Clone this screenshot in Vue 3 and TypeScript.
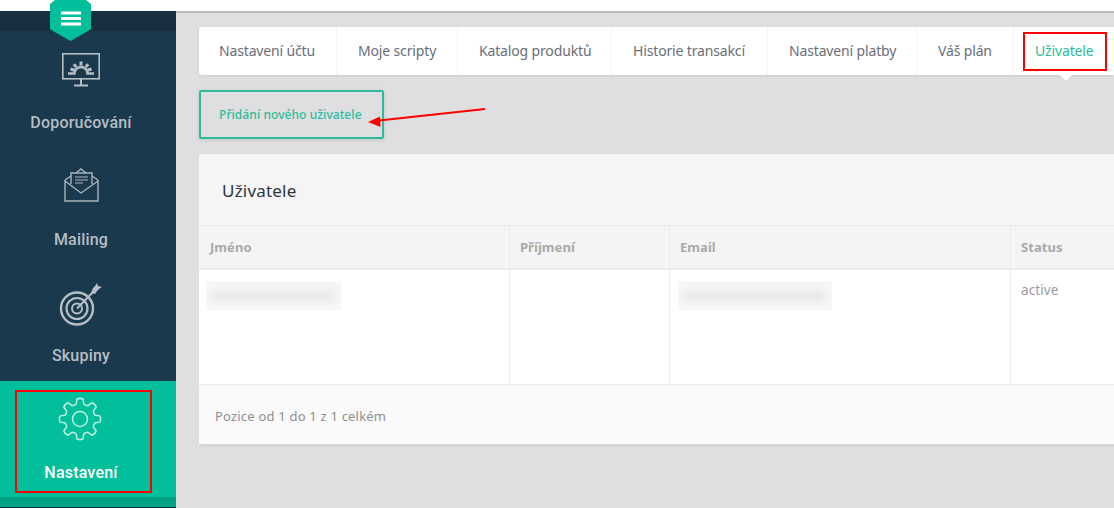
<script setup lang="ts">
const tabs = [
  { label: 'Nastavení účtu', w: 138 },
  { label: 'Moje scripty', w: 121 },
  { label: 'Katalog produktů', w: 154 },
  { label: 'Historie transakcí', w: 156 },
  { label: 'Nastavení platby', w: 149 },
  { label: 'Váš plán', w: 97 },
  { label: 'Uživatele', w: 100, active: true },
]

function polar(r: number, deg: number): string {
  const a = ((deg - 90) * Math.PI) / 180
  return `${(22 + r * Math.cos(a)).toFixed(2)} ${(22 + r * Math.sin(a)).toFixed(2)}`
}

const gearPath = (() => {
  let d = ''
  for (let i = 0; i < 8; i++) {
    const a = i * 45
    d += `${i === 0 ? 'M' : 'L'}${polar(15.5, a - 14)}`
    d += `L${polar(20, a - 9)}Q${polar(21.5, a)} ${polar(20, a + 9)}L${polar(15.5, a + 14)}`
    d += `Q${polar(14.5, a + 22.5)} ${polar(15.5, a + 31)}`
  }
  return d + 'Z'
})()
</script>

<template>
  <div class="page">
    <div class="topbar"></div>
    <div class="body">
      <aside class="side">
        <div class="side-head"></div>
        <div class="item">
          <svg class="ic mon" width="40" height="36" viewBox="0 0 40 36" fill="none" stroke="#b5bec5" stroke-width="1.6">
            <rect x="1.800" y="1.800" width="36.400" height="25" />
            <path d="M20 27v6" stroke-width="2" />
            <path d="M13 33.500h14" stroke-width="2" />
            <path d="M7 21.500h6.500a6.500 6.500 0 0 1 13 0H33" stroke-width="2.400" />
            <path d="M20 9.500v4M12.800 12.300l2.500 2.700M27.200 12.300l-2.500 2.700M9.500 17l4 1.300M30.500 17l-4 1.300" stroke-width="3" />
          </svg>
          <span>Doporučování</span>
        </div>
        <div class="item low">
          <svg class="ic env" width="36" height="36" viewBox="0 0 36 36" fill="none" stroke="#a9b4bb" stroke-width="1.4">
            <path d="M2 13v21h33V13" />
            <path d="M2 14l16 12 17-12" />
            <path d="M2 13l6-4M35 13l-6-4M13 6l5-4 5 4" />
            <path d="M8 17V6h21v11" />
            <path d="M12 10h13M12 13h13M12 16h8" stroke-width="1.200" />
          </svg>
          <span>Mailing</span>
        </div>
        <div class="item tall low">
          <svg class="ic tgt" width="46" height="44" viewBox="0 0 46 44" fill="none" stroke="#b5bec5">
            <circle cx="19" cy="25.500" r="16" stroke-width="2.400" />
            <circle cx="19" cy="25.500" r="10.500" stroke-width="2.200" />
            <circle cx="19" cy="25.500" r="5" stroke-width="2" />
            <path d="M19 25.500L36 8" stroke-width="2" />
            <path d="M35 5l2-2 2-3 1 3 4 1-3 2-2 2-2 3-4-1z" fill="#b5bec5" stroke="none" />
          </svg>
          <span>Skupiny</span>
        </div>
        <div class="item active">
          <svg class="ic gear" width="44" height="44" viewBox="0 0 44 44" fill="none" stroke="#bfeee0" stroke-width="1.500">
            <circle cx="22" cy="22" r="7.500" />
            <path :d="gearPath" stroke-linejoin="round" />
          </svg>
          <span>Nastavení</span>
        </div>
        <div class="active-foot"></div>
      </aside>

      <main class="main">
        <nav class="tabs">
          <a
            v-for="t in tabs"
            :key="t.label"
            class="tab"
            :class="{ on: t.active }"
            :style="{ flexBasis: t.w + 'px' }"
          >{{ t.label }}</a>
        </nav>
        <button class="add">Přidání nového uživatele</button>
        <section class="card">
          <h2>Uživatele</h2>
          <div class="grid head">
            <div>Jméno</div>
            <div>Příjmení</div>
            <div>Email</div>
            <div>Status</div>
          </div>
          <div class="grid row">
            <div><span class="smudge name"><i></i></span></div>
            <div></div>
            <div><span class="smudge mail"><i></i></span></div>
            <div class="st">active</div>
          </div>
          <footer>Pozice od 1 do 1 z 1 celkém</footer>
        </section>
      </main>
    </div>

    <div class="burger">
      <svg width="20" height="15" viewBox="0 0 20 15" fill="#fff">
        <rect width="20" height="3" y="0.500" rx="0.500" />
        <rect width="20" height="3" y="6" rx="0.500" />
        <rect width="20" height="3" y="11.500" rx="0.500" />
      </svg>
    </div>
    <div class="mark mark-side"></div>
    <div class="mark mark-tab"></div>
    <svg class="arrow" width="130" height="30" viewBox="0 0 130 30">
      <path d="M121 3L15 14.500" stroke="#f00" stroke-width="2" fill="none" />
      <path d="M4 16L16 10.500L16.500 21z" fill="#f00" />
    </svg>
  </div>
</template>

<style>
html, body { margin: 0; background: #dfdfe1; }
</style>

<style scoped>
.page {
  position: relative;
  width: 1114px;
  height: 508px;
  overflow: hidden;
  background: #dfdfe1;
  font-family: "Noto Sans", "Open Sans", sans-serif;
}
.topbar {
  height: 11px;
  background: #fff;
  border-bottom: 2px solid #b9b9bb;
  box-sizing: content-box;
  margin-bottom: -2px;
  position: relative;
  z-index: 1;
}
.body { display: flex; height: 497px; }
.side {
  width: 176px;
  flex: none;
  background: #1b394d;
  display: flex;
  flex-direction: column;
  font-family: Roboto, sans-serif;
  position: relative;
  z-index: 2;
}
.side-head { height: 20px; background: #172f40; }
.item {
  height: 116px;
  flex: none;
  box-sizing: border-box;
  border-bottom: 1px solid #19344a;
  color: #b5bec5;
  font-size: 16px;
  font-weight: 500;
  letter-spacing: 0.2px;
  position: relative;
}
.item.tall { height: 118px; border-bottom: 0; }
.item span {
  position: absolute;
  top: 82px;
  left: -14px;
  right: 0;
  text-align: center;
  line-height: 20px;
}
.item.low span { top: 83px; }
.item.active { background: #00bf9a; color: #fff; border-bottom: 0; }
.ic { position: absolute; }
.mon { top: 21px; left: 61px; }
.env { top: 20px; left: 63px; }
.tgt { top: 20px; left: 58px; }
.gear { top: 16px; left: 58px; }
.active-foot { height: 10px; background: #00a284; border-bottom: 1px solid #103040; flex: none; }
.main { flex: 1; min-width: 0; padding: 16px 0 0 23px; overflow: hidden; }
.tabs {
  display: flex;
  height: 48px;
  width: 915px;
  background: #fff;
  border-radius: 3px 0 0 3px;
  box-shadow: 0 1px 3px rgba(0, 0, 0, 0.08);
  position: relative;
}
.tab {
  flex: none;
  box-sizing: border-box;
  padding: 0 0 0 20px;
  border-right: 1px solid #f4f4f5;
  color: #6a6e78;
  font-size: 14px;
  line-height: 47px;
  white-space: nowrap;
  position: relative;
  letter-spacing: -0.15px;
}
.tab + .tab { padding-left: 21px; }
.tab:last-child { border-right: 0; }
.tab.on { color: #2bbd9a; }
.tab.on::after {
  content: "";
  position: absolute;
  left: 46px;
  bottom: -6px;
  border: 6px solid transparent;
  border-top-color: #fff;
  border-bottom: 0;
}
.add {
  display: block;
  margin: 15px 0 15px;
  width: 185px;
  height: 49px;
  box-sizing: border-box;
  background: transparent;
  border: 2px solid #2bbb9b;
  border-radius: 2px;
  box-shadow: 0 1px 4px rgba(0, 0, 0, 0.12);
  color: #2bbd9a;
  font: 500 12px "Noto Sans", sans-serif;
  letter-spacing: 0.07px;
  text-align: left;
  padding: 0 0 0 18px;
}
.card {
  width: 915px;
  height: 293px;
  box-sizing: border-box;
  background: #f5f5f5;
  border-radius: 3px 0 0 3px;
  border-bottom: 3px solid #d6d6d6;
  display: flex;
  flex-direction: column;
}
h2 {
  margin: 0;
  height: 72px;
  box-sizing: border-box;
  padding: 25px 0 0 23px;
  font-size: 17px;
  line-height: 24px;
  font-weight: 400;
  letter-spacing: 0.2px;
  color: #2f3542;
  border-bottom: 1px solid #ebebeb;
}
.grid {
  display: grid;
  grid-template-columns: 310px 160px 341px 1fr;
  margin-left: 1px;
}
.grid > div { box-sizing: border-box; border-right: 1px solid #ececec; }
.grid > div:last-child { border-right: 0; }
.head {
  height: 44px;
  box-sizing: border-box;
  background: #f4f4f4;
  border-bottom: 2px solid #ececec;
  color: #a9a9ac;
  font-size: 13px;
  font-weight: 700;
  line-height: 42px;
  letter-spacing: 0.05px;
}
.head > div { padding-left: 10px; }
.row {
  height: 114px;
  box-sizing: border-box;
  background: #fff;
  margin-left: 0;
  padding-left: 1px;
}
.row > div { position: relative; }
.st {
  padding: 10px 0 0 10px;
  font-size: 13.500px;
  color: #9b9b9e;
  line-height: 20px;
  letter-spacing: 0.1px;
}
.smudge {
  position: absolute;
  top: 11px;
  height: 29px;
  background: #f7f7f7;
  display: block;
  overflow: hidden;
}
.smudge i {
  position: absolute;
  left: 6px;
  right: 6px;
  top: 10px;
  height: 10px;
  background: #e6e6e6;
  filter: blur(4px);
}
.smudge.name { left: 6px; width: 135px; }
.smudge.mail { left: 8px; width: 154px; }
footer {
  flex: 1;
  background: #fafafa;
  border-top: 1px solid #ebebeb;
  padding: 21px 0 0 16px;
  font-size: 13px;
  line-height: 20px;
  color: #8f8f92;
  letter-spacing: 0.2px;
}
.burger {
  position: absolute;
  left: 50px;
  top: -1px;
  width: 41px;
  height: 42px;
  background: #00bf9a;
  clip-path: polygon(15% 0, 85% 0, 100% 12%, 100% 72%, 50% 100%, 0 72%, 0 12%);
  display: flex;
  align-items: center;
  justify-content: center;
  z-index: 3;
}
.burger svg { margin-top: -3px; }
.mark {
  position: absolute;
  box-sizing: border-box;
  border: 2px solid #f00;
  z-index: 4;
}
.mark-side { left: 15px; top: 390px; width: 137px; height: 103px; }
.mark-tab { left: 1023px; top: 32px; width: 84px; height: 39px; }
.arrow { position: absolute; left: 364px; top: 106px; z-index: 4; }
</style>
